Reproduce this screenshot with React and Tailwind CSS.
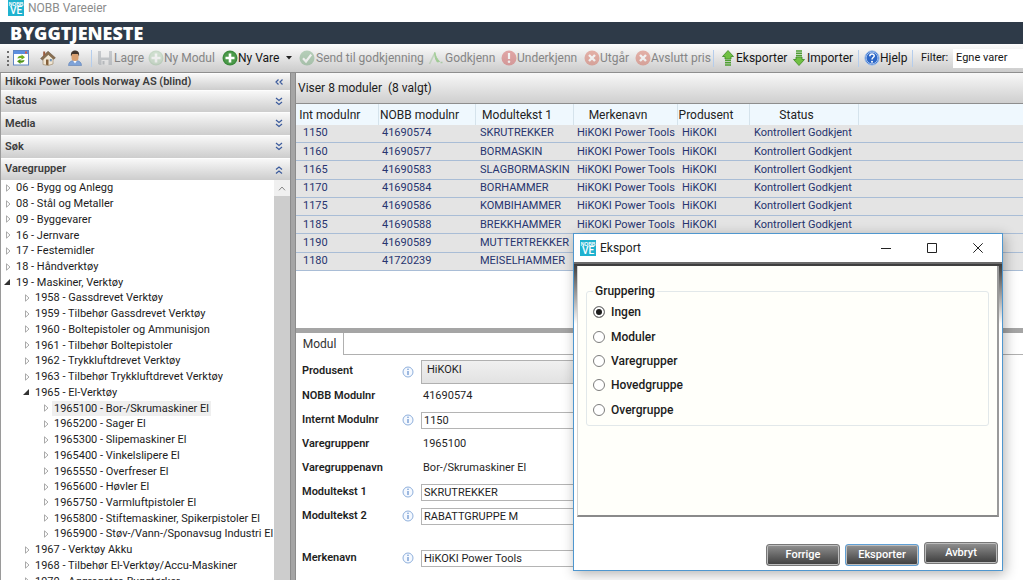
import React from "react";

const TREE = [
  [0, "06 - Bygg og Anlegg"],
  [0, "08 - Stål og Metaller"],
  [0, "09 - Byggevarer"],
  [0, "16 - Jernvare"],
  [0, "17 - Festemidler"],
  [0, "18 - Håndverktøy"],
  [0, "19 - Maskiner, Verktøy", "open"],
  [1, "1958 - Gassdrevet Verktøy"],
  [1, "1959 - Tilbehør Gassdrevet Verktøy"],
  [1, "1960 - Boltepistoler og Ammunisjon"],
  [1, "1961 - Tilbehør Boltepistoler"],
  [1, "1962 - Trykkluftdrevet Verktøy"],
  [1, "1963 - Tilbehør Trykkluftdrevet Verktøy"],
  [1, "1965 - El-Verktøy", "open"],
  [2, "1965100 - Bor-/Skrumaskiner El", "selected"],
  [2, "1965200 - Sager El"],
  [2, "1965300 - Slipemaskiner El"],
  [2, "1965400 - Vinkelslipere El"],
  [2, "1965550 - Overfreser El"],
  [2, "1965600 - Høvler El"],
  [2, "1965750 - Varmluftpistoler El"],
  [2, "1965800 - Stiftemaskiner, Spikerpistoler El"],
  [2, "1965900 - Støv-/Vann-/Sponavsug Industri El"],
  [1, "1967 - Verktøy Akku"],
  [1, "1968 - Tilbehør El-Verktøy/Accu-Maskiner"],
  [1, "1970 - Aggregater, Byggtørker"],
];
const INDENT = ["pl-1", "pl-[23px]", "pl-[42px]"];

const ROWS = [
  ["1150", "41690574", "SKRUTREKKER"],
  ["1160", "41690577", "BORMASKIN"],
  ["1165", "41690583", "SLAGBORMASKIN"],
  ["1170", "41690584", "BORHAMMER"],
  ["1175", "41690586", "KOMBIHAMMER"],
  ["1185", "41690588", "BREKKHAMMER"],
  ["1190", "41690589", "MUTTERTREKKER"],
  ["1180", "41720239", "MEISELHAMMER"],
];

function NobbLogo() {
  return (
    <svg viewBox="0 0 16 16" className="size-4 shrink-0" aria-hidden="true">
      <rect width="16" height="16" fill="#1fb2cf" />
      <text x="8" y="5.8" fontSize="5" fontWeight="700" textAnchor="middle" fill="#fff" fontFamily="Liberation Sans, sans-serif">NOBB</text>
      <text x="8" y="14.4" fontSize="10" fontWeight="500" textAnchor="middle" fill="#fff" fontFamily="Roboto, sans-serif">VE</text>
    </svg>
  );
}

function Svg({ children, className = "" }) {
  return (
    <svg viewBox="0 0 16 16" className={"size-4 shrink-0 " + className} fill="none" aria-hidden="true">
      {children}
    </svg>
  );
}
const RefreshIcon = () => (
  <Svg>
    <rect x="0.5" y="0.5" width="15" height="14.5" fill="#fff" stroke="#5f86c4" />
    <rect x="1" y="1" width="14" height="3" fill="#5c8fe0" />
    <rect x="12" y="1.5" width="2" height="2" fill="#d9584a" />
    <path d="M4.5 8.5c.3-2 2-3 4-2.6V4.500l3.500 2.800-3.500 2.500V8.200c-1.500-.3-2.600 0-4 .3z" fill="#6fae1e" />
    <path d="M11.500 10c-.3 2-2 3-4 2.600V14l-3.500-2.800 3.500-2.300v1.500c1.500.3 2.600 0 4-.4z" fill="#4f9416" />
  </Svg>
);
const HomeIcon = () => (
  <Svg>
    <path d="M3 8v6.500l5 1 5-1.500V7.500L8.500 3z" fill="#f1e7d4" stroke="#a08b6c" strokeWidth=".7" />
    <path d="M.6 8.600 8 1.200l7.400 6.600-1.700 1.500L8.300 4.500 2.400 10z" fill="#8a6f50" stroke="#5b4a38" strokeWidth=".5" />
    <path d="M3.200 1.500h2v3l-2 1.800z" fill="#9a5a3c" />
    <path d="M6 9.500h2.500v5.700L6 14.700z" fill="#84603a" />
    <rect x="9.800" y="9" width="2" height="2.300" fill="#6f93b8" />
  </Svg>
);
const PersonIcon = () => (
  <Svg>
    <path d="M1.500 15.500c0-3 2-4.600 5-5h3c3 .4 5 2 5 5z" fill="#7fa3d8" stroke="#5d7fb5" strokeWidth=".6" />
    <path d="m6 10.500 2 3 2-3z" fill="#fff" />
    <rect x="4.500" y="1.500" width="7" height="9.500" rx="3.300" fill="#d9a071" />
    <path d="M4 6.500C3.500 2.500 5 .4 8 .4s4.700 2 4 6.100l-1-2.500H5.200z" fill="#42352d" />
  </Svg>
);
const SaveIcon = () => (
  <Svg className="opacity-40">
    <path d="M1 1h14v14H2.500L1 13.500z" fill="#8e959d" />
    <rect x="4" y="1" width="8" height="6.500" fill="#f3f3f3" />
    <rect x="4.500" y="10" width="7" height="5" fill="#e6e6e6" />
    <rect x="5.500" y="11" width="2" height="3.500" fill="#7d848c" />
  </Svg>
);
const PlusIcon = ({ dim }) => (
  <Svg className={dim ? "opacity-40" : ""}>
    <circle cx="8" cy="8" r="7.500" fill={dim ? "#8fb98f" : "#3d8b3d"} />
    <circle cx="8" cy="8" r="6.200" fill={dim ? "#a5cba5" : "#4c9a4a"} />
    <path d="M8 3.500v9M3.500 8h9" stroke="#fff" strokeWidth="2.600" />
  </Svg>
);
const CheckIcon = () => (
  <Svg className="opacity-40">
    <circle cx="8" cy="8" r="7.500" fill="#5f9d67" />
    <path d="m4 8.200 3 3.300 5.200-6.800" stroke="#fff" strokeWidth="2.200" />
  </Svg>
);
const ApproveIcon = () => (
  <Svg className="opacity-60">
    <path d="M1.500 14 7 2.500" stroke="#a9c8a4" strokeWidth="1.600" />
    <path d="M6.800 2.500c.6 3.500 2.200 6.500 4.700 9l-2.200.5C7.500 9.500 6.500 6.500 6.800 2.500z" fill="#76bd63" stroke="#76bd63" />
    <path d="M12.500 12.500h2" stroke="#8bbd83" strokeWidth="1.500" />
  </Svg>
);
const AlertIcon = () => (
  <Svg className="opacity-45">
    <circle cx="8" cy="8" r="7.500" fill="#cf4d4d" />
    <path d="M8 3v6" stroke="#fff" strokeWidth="2.200" />
    <circle cx="8" cy="11.800" r="1.300" fill="#fff" />
  </Svg>
);
const CrossIcon = () => (
  <Svg className="opacity-45">
    <circle cx="8" cy="8" r="7.500" fill="#d4624f" />
    <path d="m5 5 6 6m0-6-6 6" stroke="#fff" strokeWidth="2.400" />
  </Svg>
);
const UpIcon = () => (
  <Svg>
    <path d="M8 .5 13.500 6.500H11V9H5V6.500H2.500z" fill="#71c043" stroke="#3c8a23" strokeWidth=".8" />
    <path d="M5 10.500h6M5 12.700h6M5 15h6" stroke="#4f9e32" strokeWidth="1.500" />
  </Svg>
);
const DownIcon = () => (
  <Svg>
    <path d="M8 15.500 13.500 9.500H11V7H5v2.500H2.500z" fill="#71c043" stroke="#3c8a23" strokeWidth=".8" />
    <path d="M5 1h6M5 3.300h6M5 5.500h6" stroke="#4f9e32" strokeWidth="1.500" />
  </Svg>
);
const HelpIcon = () => (
  <Svg>
    <circle cx="8" cy="8" r="7.200" fill="#3c78d2" stroke="#a9c4ea" strokeWidth="1" />
    <circle cx="8" cy="8" r="5.800" fill="#2c66c6" stroke="#dfeafa" strokeWidth=".6" />
    <path d="M5.800 6.200c0-3 4.600-2.800 4.400-.2-.1 1.500-2.200 1.600-2.200 3.400" stroke="#fff" strokeWidth="1.500" />
    <circle cx="8" cy="11.700" r="1" fill="#fff" />
  </Svg>
);
const InfoIcon = () => (
  <svg viewBox="0 0 12 12" className="size-3 shrink-0" fill="none" aria-hidden="true">
    <circle cx="6" cy="6" r="5" fill="#f5f9ff" stroke="#8fb0dc" />
    <path d="M6 5v4" stroke="#6d96cf" strokeWidth="1.300" />
    <circle cx="6" cy="3.200" r=".8" fill="#6d96cf" />
  </svg>
);
const Chevrons = ({ d }) => (
  <svg viewBox="0 0 10 10" className="size-[10px] shrink-0" fill="none" stroke="#3a5a9c" strokeWidth="1.200" aria-hidden="true">
    <path d={d} />
  </svg>
);
const DOWN = "M2 1l3 2.500 3-2.500M2 5l3 2.500 3-2.500";
const UP = "M2 4.500l3-2.500 3 2.500M2 8.500l3-2.500 3 2.500";
const LEFT = "M4.500 2.500l-2.500 2.500 2.500 2.500M8.500 2.500l-2.500 2.500 2.500 2.500";

function Tool({ icon, children, width, off }) {
  return (
    <button
      type="button"
      disabled={off}
      className={"flex shrink-0 items-center whitespace-nowrap text-[12px] " + width + (off ? " text-[#858585]" : " text-[#161616]")}
    >
      {icon}
      {children}
    </button>
  );
}
const Sep = ({ className }) => <span className={"h-[17px] w-px shrink-0 bg-[#b5cdec] " + className} />;

function Toolbar() {
  return (
    <div className="flex h-[29px] shrink-0 items-center overflow-hidden border-b border-[#8e8e8e] bg-linear-to-b from-[#fdfdfd] to-[#cbcbcb] pl-[7px]">
      <span className="h-[15px] w-[6px] shrink-0 border-l-2 border-dotted border-[#6d6d6d]" />
      <button type="button" aria-label="Oppdater" className="w-[27px] shrink-0"><RefreshIcon /></button>
      <button type="button" aria-label="Hjem" className="w-[27px] shrink-0"><HomeIcon /></button>
      <button type="button" aria-label="Bruker" className="w-[24px] shrink-0"><PersonIcon /></button>
      <Sep className="mr-[5px]" />
      <Tool icon={<SaveIcon />} width="w-[51px] gap-px" off>Lagre</Tool>
      <Tool icon={<PlusIcon dim />} width="w-[74px]" off>Ny Modul</Tool>
      <Tool icon={<PlusIcon />} width="w-[64px]">Ny Vare</Tool>
      <button type="button" aria-label="Flere valg" className="flex w-[13px] shrink-0">
        <svg viewBox="0 0 6 4" className="h-1 w-[6px]" aria-hidden="true"><path d="M0 0h6L3 3.500z" fill="#222" /></svg>
      </button>
      <Tool icon={<CheckIcon />} width="w-[129px] gap-px" off>Send til godkjenning</Tool>
      <Tool icon={<ApproveIcon />} width="w-[73px] gap-px" off>Godkjenn</Tool>
      <Tool icon={<AlertIcon />} width="w-[83px]" off>Underkjenn</Tool>
      <Tool icon={<CrossIcon />} width="w-[51px]" off>Utgår</Tool>
      <Tool icon={<CrossIcon />} width="w-[78px]" off>Avslutt pris</Tool>
      <Sep className="mr-[6px]" />
      <Tool icon={<UpIcon />} width="w-[71px]">Eksporter</Tool>
      <Tool icon={<DownIcon />} width="w-[67px]">Importer</Tool>
      <Sep className="mr-[5px]" />
      <Tool icon={<HelpIcon />} width="w-[48px]">Hjelp</Tool>
      <Sep className="mr-2" />
      <label htmlFor="filter" className="w-8 shrink-0 text-[11px] text-[#161616]">Filter:</label>
      <select id="filter" className="h-[19px] min-w-0 flex-1 appearance-none bg-white pl-[3px] text-[11px] text-[#161616]">
        <option>Egne varer</option>
      </select>
    </div>
  );
}

function PanelHeader({ title, icon, height }) {
  return (
    <button
      type="button"
      className={"flex w-full shrink-0 items-center justify-between border-t border-[#fdfdfd] bg-linear-to-b from-[#f8f8f8] to-[#cdcdcd] pr-[6px] pl-1 text-[11px] font-semibold text-[#3c3c3c] " + height}
    >
      {title}
      <Chevrons d={icon} />
    </button>
  );
}

function TreeRow({ level, text, state }) {
  return (
    <li className={"flex items-center whitespace-nowrap " + INDENT[level]}>
      <svg viewBox="0 0 8 8" className={"size-2 shrink-0 " + (state === "open" ? "-ml-[2px] mr-[3px]" : "mr-px")} aria-hidden="true">
        {state === "open" ? (
          <path d="M7 1v6H1z" fill="#333" />
        ) : (
          <path d="M1.500 .8v6.400L5 4z" fill="#fff" stroke="#a0a0a0" strokeWidth=".9" />
        )}
      </svg>
      <span className={"px-[2px] leading-[15px] " + (state === "selected" ? "bg-[#efefef]" : "")}>{text}</span>
    </li>
  );
}

function Sidebar() {
  return (
    <aside className="flex w-[290px] shrink-0 flex-col overflow-hidden border-l border-[#9a9a9a] bg-white">
      <PanelHeader title="Hikoki Power Tools Norway AS (blind)" icon={LEFT} height="h-[17px]" />
      <PanelHeader title="Status" icon={DOWN} height="h-[22px]" />
      <PanelHeader title="Media" icon={DOWN} height="h-[23px]" />
      <PanelHeader title="Søk" icon={DOWN} height="h-[23px]" />
      <PanelHeader title="Varegrupper" icon={UP} height="h-[22px]" />
      <div className="flex min-h-0 flex-1">
        <ul className="grid h-[409px] min-w-0 flex-1 auto-rows-fr text-[11px] text-[#1c1c1c]">
          {TREE.map(([level, text, state]) => (
            <TreeRow key={text} level={level} text={text} state={state} />
          ))}
        </ul>
        <div className="w-4 shrink-0 bg-[#cdcdcd]">
          <button type="button" aria-label="Rull opp" className="flex h-4 w-full items-center justify-center bg-[#f0f0f0]">
            <svg viewBox="0 0 8 5" className="h-[5px] w-2" fill="none" stroke="#888" aria-hidden="true"><path d="M1 4.300 4 1l3 3.300" /></svg>
          </button>
        </div>
      </div>
    </aside>
  );
}

function ModuleTable() {
  const heads = ["Int modulnr", "NOBB modulnr", "Modultekst 1", "Merkenavn", "Produsent", "Status"];
  return (
    <table className="h-[167px] w-full table-fixed border-collapse text-[11px] whitespace-nowrap">
      <colgroup>
        <col className="w-[82px]" /><col className="w-[97px]" /><col className="w-[98px]" />
        <col className="w-[104px]" /><col className="w-[72px]" /><col className="w-[109px]" /><col />
      </colgroup>
      <thead>
        <tr className="h-[21px] bg-[#eff8fe] text-[12px] text-[#222]">
          {heads.map((h) => (
            <th key={h} scope="col" className="border-r border-[#d5e3ec] p-0 pr-[14px] text-center leading-[18px] font-normal">{h}</th>
          ))}
          <td className="p-0" />
        </tr>
      </thead>
      <tbody>
        {ROWS.map(([a, b, c]) => (
          <tr key={a} className="border-b border-[#a9bdd6] bg-[#e4e4e4] text-[#27346f]">
            <td className="p-0 pl-[7px]">{a}</td>
            <td className="p-0 pl-1">{b}</td>
            <td className="p-0 pl-[5px]">{c}</td>
            <td className="p-0 pl-1">HiKOKI Power Tools</td>
            <td className="p-0 pl-[5px]">HiKOKI</td>
            <td className="p-0 pl-[5px]">Kontrollert Godkjent</td>
            <td className="p-0" />
          </tr>
        ))}
      </tbody>
    </table>
  );
}

function FormRow({ id, label, value, kind, className = "h-6" }) {
  return (
    <div className={"flex items-center " + className}>
      <label htmlFor={id} className="w-[100px] shrink-0 font-semibold text-[#1f1f1f]">{label}</label>
      <span className="w-[19px] shrink-0">{kind !== "text" && <InfoIcon />}</span>
      {kind === "text" && <output id={id} className="pl-[2px]">{value}</output>}
      {kind === "input" && (
        <input id={id} defaultValue={value} className="h-[17px] min-w-0 flex-1 border border-[#b4b4b4] bg-white px-[2px]" />
      )}
      {kind === "select" && (
        <select id={id} className="h-6 min-w-0 flex-1 appearance-none border border-[#b0b0b0] bg-linear-to-b from-[#f0f0f0] to-[#e2e2e2] px-[5px] pb-[2px]">
          <option>{value}</option>
        </select>
      )}
    </div>
  );
}

function ExportDialog() {
  const options = ["Ingen", "Moduler", "Varegrupper", "Hovedgruppe", "Overgruppe"];
  const btn = "h-[22px] w-[74px] rounded-[3px] border bg-linear-to-b from-[#929292] to-[#3e3e3e] text-[11px] font-medium text-white shadow-[inset_0_0_0_1px_#bdbdbd] ";
  return (
    <section
      role="dialog"
      aria-labelledby="export-title"
      className="absolute top-[233px] right-[20px] flex h-[338px] w-[430px] flex-col border border-[#4f97cf] bg-white shadow-[2px_3px_12px_rgba(0,0,0,0.3)]"
    >
      <header className="flex h-7 shrink-0 items-center pl-[6px]">
        <NobbLogo />
        <h2 id="export-title" className="flex-1 pl-1 text-[12px] text-[#222]">Eksport</h2>
        <button type="button" aria-label="Minimer" className="flex w-[46px] justify-center">
          <svg viewBox="0 0 10 10" className="size-[10px]" stroke="#222" aria-hidden="true"><path d="M0 5.500h10" /></svg>
        </button>
        <button type="button" aria-label="Maksimer" className="flex w-[46px] justify-center">
          <svg viewBox="0 0 10 10" className="size-[10px]" stroke="#222" fill="none" aria-hidden="true"><path d="M.5.5h9v9h-9z" /></svg>
        </button>
        <button type="button" aria-label="Lukk" className="mr-px flex w-[46px] justify-center">
          <svg viewBox="0 0 10 10" className="size-[10px]" stroke="#222" fill="none" aria-hidden="true"><path d="m.3.3 9.400 9.400m0-9.400L.3 9.700" /></svg>
        </button>
      </header>
      <div className="flex flex-1 flex-col border-t-2 border-[#6b6b6b] bg-[linear-gradient(#3b3b3b,#d0d0d0_46px,#ffffff_60px)] px-[3px] pt-[2px]">
        <div className="flex-1 border-r-2 border-b-2 border-l border-r-[#9a9a9a] border-b-[#8a8a8a] border-l-[#d4d4d4] bg-[#fffffa] px-2 pt-[17px]">
          <fieldset className="h-[143px] rounded-[3px] border border-[#e2e8ea] pl-[6px] text-[12px] font-medium text-[#1c1c1c]">
            <legend className="px-[2px] leading-[17px]">Gruppering</legend>
            <div className="grid h-[122px] auto-rows-fr">
              {options.map((o, i) => (
                <label key={o} className="flex items-center gap-[6px]">
                  <input
                    type="radio"
                    name="gruppering"
                    defaultChecked={i === 0}
                    className="size-3 appearance-none rounded-full border border-[#7d7d7d] bg-white checked:bg-[#1c1c1c] checked:shadow-[inset_0_0_0_2px_#fff]"
                  />
                  {o}
                </label>
              ))}
            </div>
          </fieldset>
        </div>
      </div>
      <footer className="flex h-[53px] shrink-0 items-end justify-end gap-[5px] pr-1 pb-1">
        <button type="button" className={btn + "border-[#777]"}>Forrige</button>
        <button type="button" className={btn + "border-[#5f9fd4]"}>Eksporter</button>
        <button type="button" className={btn + "mb-[2px] border-[#777]"}>Avbryt</button>
      </footer>
    </section>
  );
}

export default function App() {
  return (
    <div className="relative flex h-screen flex-col overflow-hidden bg-white font-[Roboto,'Open_Sans',sans-serif]">
      <header className="flex h-[22px] shrink-0 items-start gap-1 pl-2 text-[12px] text-[#8b8b8b]">
        <NobbLogo />
        <h1 className="leading-[16px]">NOBB Vareeier</h1>
      </header>
      <div className="flex h-[22px] shrink-0 items-center bg-[#2e3a48] pl-[10px] font-['Open_Sans',sans-serif] text-[18px] font-extrabold text-white">BYGGTJENESTE</div>
      <Toolbar />
      <div className="flex min-h-0 flex-1">
        <Sidebar />
        <div className="w-[6px] shrink-0 border-x border-[#8c8c8c] bg-[#a5a5a5]" />
        <main className="flex min-w-0 flex-1 flex-col">
          <div className="flex h-[31px] shrink-0 items-center border-b border-[#8e8e8e] bg-linear-to-b from-[#f8f8f8] to-[#cfcfcf] pl-[2px] text-[12px] whitespace-pre text-[#1c1c1c]">
            {"Viser 8 moduler  (8 valgt)"}
          </div>
          <div className="h-[224px] shrink-0 overflow-hidden"><ModuleTable /></div>
          <div className="h-[5px] shrink-0 bg-[#a5a5a5]" />
          <div className="flex h-[22px] shrink-0">
            <button type="button" className="w-12 border-r border-[#b0b0b0] text-[12px] text-[#333]">Modul</button>
            <div className="flex-1 border-b border-[#b0b0b0]" />
          </div>
          <form className="pt-1 pr-[30px] pl-[6px] text-[11px] text-[#1f1f1f]">
            <FormRow id="produsent" label="Produsent" value="HiKOKI" kind="select" className="h-[25px]" />
            <FormRow id="nobbnr" label="NOBB Modulnr" value="41690574" kind="text" />
            <FormRow id="internt" label="Internt Modulnr" value="1150" kind="input" />
            <FormRow id="vgnr" label="Varegruppenr" value="1965100" kind="text" />
            <FormRow id="vgnavn" label="Varegruppenavn" value="Bor-/Skrumaskiner El" kind="text" />
            <FormRow id="tekst1" label="Modultekst 1" value="SKRUTREKKER" kind="input" />
            <FormRow id="tekst2" label="Modultekst 2" value="RABATTGRUPPE M" kind="input" />
            <FormRow id="merke" label="Merkenavn" value="HiKOKI Power Tools" kind="input" className="mt-[18px] h-6" />
          </form>
        </main>
      </div>
      <ExportDialog />
    </div>
  );
}
